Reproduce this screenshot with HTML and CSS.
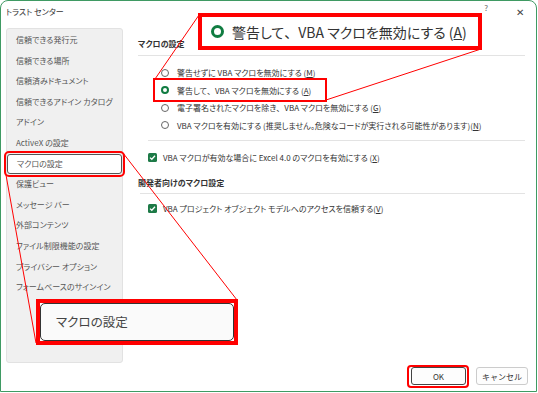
FILE: index.html
```html
<!DOCTYPE html>
<html lang="ja">
<head>
<meta charset="utf-8">
<link rel="stylesheet" href="styles.css">
</head>
<body>
<div class="stage">
  <div class="window">
    <div class="titlebar">
      <span class="title">トラスト センター</span>
      <span class="help">?</span>
      <span class="close">✕</span>
    </div>
    <div class="content">
      <nav class="sidebar">
        <div class="nav-item">信頼できる発行元</div>
        <div class="nav-item">信頼できる場所</div>
        <div class="nav-item">信頼済みドキュメント</div>
        <div class="nav-item">信頼できるアドイン カタログ</div>
        <div class="nav-item">アドイン</div>
        <div class="nav-item">ActiveX の設定</div>
        <div class="nav-item selected">マクロの設定</div>
        <div class="nav-item">保護ビュー</div>
        <div class="nav-item">メッセージ バー</div>
        <div class="nav-item">外部コンテンツ</div>
        <div class="nav-item">ファイル制限機能の設定</div>
        <div class="nav-item">プライバシー オプション</div>
        <div class="nav-item">フォームベースのサインイン</div>
      </nav>
      <main class="main">
        <div class="section-title">マクロの設定</div>
        <div class="sep"></div>
        <div class="radios">
          <div class="row"><span class="radio"></span><span>警告せずに VBA マクロを無効にする (<u>M</u>)</span></div>
          <div class="row"><span class="radio on"></span><span>警告して<span class="wide">、</span>VBA マクロを無効にする (<u>A</u>)</span></div>
          <div class="row"><span class="radio"></span><span>電子署名されたマクロを除き<span class="wide">、</span>VBA マクロを無効にする (<u>G</u>)</span></div>
          <div class="row"><span class="radio"></span><span>VBA マクロを有効にする (推奨しません。危険なコードが実行される可能性があります)(<u>N</u>)</span></div>
        </div>
        <div class="sep sep-indent"></div>
        <div class="row check-row first-check"><span class="check"><svg viewBox="0 0 9 9" width="9" height="9"><path d="M2 4.6 L3.8 6.3 L7 2.8" fill="none" stroke="#fff" stroke-width="1.3"/></svg></span><span>VBA マクロが有効な場合に Excel 4.0 のマクロを有効にする (<u>X</u>)</span></div>
        <div class="section-title second">開発者向けのマクロ設定</div>
        <div class="sep sep-small"></div>
        <div class="row check-row second-check"><span class="check"><svg viewBox="0 0 9 9" width="9" height="9"><path d="M2 4.6 L3.8 6.3 L7 2.8" fill="none" stroke="#fff" stroke-width="1.3"/></svg></span><span>VBA プロジェクト オブジェクト モデルへのアクセスを信頼する(<u>V</u>)</span></div>
      </main>
    </div>
    <div class="footer">
      <button class="btn default">OK</button>
      <button class="btn">キャンセル</button>
    </div>
  </div>

  <svg class="lines" width="538" height="393" viewBox="0 0 538 393">
    <line x1="155" y1="79" x2="199" y2="15" stroke="#f00" stroke-width="1"/>
    <line x1="326" y1="100" x2="481" y2="49" stroke="#f00" stroke-width="1"/>
    <line x1="123" y1="153" x2="237" y2="300" stroke="#f00" stroke-width="1"/>
    <line x1="6" y1="175" x2="36" y2="343" stroke="#f00" stroke-width="1"/>
  </svg>

  <div class="hl hl-radio"></div>
  <div class="hl hl-nav"></div>
  <div class="hl hl-ok"></div>

  <div class="callout callout-top">
    <span class="big-radio"></span>
    <span class="callout-text">警告して<span class="wide">、</span>VBA マクロを無効にする (<u>A</u>)</span>
  </div>

  <div class="callout callout-nav">
    <div class="callout-inner">マクロの設定</div>
  </div>
</div>
</body>
</html>
```

FILE: styles.css
```css
* { box-sizing: border-box; }
html, body { margin: 0; padding: 0; background: #fff; }
body {
  font-family: "Noto Sans CJK JP", "Noto Sans", sans-serif;
  font-feature-settings: "palt";
  color: #333;
}
.wide { font-feature-settings: normal; }
.stage {
  position: relative;
  width: 538px;
  height: 393px;
  overflow: hidden;
}
.window {
  width: 537px;
  height: 392px;
  border: 1px solid #3f9a63;
  border-radius: 8px 8px 0 0;
  background: #fff;
  display: flex;
  flex-direction: column;
}
.titlebar {
  height: 27px;
  display: flex;
  align-items: flex-start;
  padding-left: 5px;
  flex: none;
}
.title {
  font-size: 8px;
  line-height: 10px;
  margin-top: 6px;
  color: #333;
}
.help {
  margin-left: auto;
  font-size: 8px;
  line-height: 10px;
  margin-top: 2px;
  color: #666;
}
.close {
  font-size: 10px;
  line-height: 12px;
  margin-top: 5px;
  margin-left: 28px;
  margin-right: 12px;
  color: #444;
}
.content {
  height: 335px;
  display: flex;
  flex: none;
}
.sidebar {
  width: 117px;
  margin-left: 5px;
  background: #f0f0f0;
  border: 1px solid #e2e2e2;
  border-radius: 3px;
  padding-top: 1px;
}
.nav-item {
  height: 20.6px;
  line-height: 20.6px;
  font-size: 8px;
  color: #555;
  padding-left: 9px;
  white-space: nowrap;
}
.nav-item.selected {
  background: #fff;
  border: 1px solid #555;
  border-radius: 3px;
  line-height: 18.6px;
  padding-left: 9px;
}
.main {
  flex: 1;
  margin-left: 15px;
  margin-right: 11px;
  padding-top: 8px;
  font-size: 8px;
}
.section-title {
  font-weight: bold;
  line-height: 16px;
  font-size: 8px;
  color: #333;
}
.sep {
  height: 1px;
  background: #e3e3e3;
  margin-top: 3px;
}
.sep-indent { margin-left: 10px; margin-top: 6px; }
.sep-small { margin-top: 2px; margin-left: 2px; }
.radios {
  padding-top: 8px;
  padding-left: 23px;
}
.row {
  height: 17.5px;
  display: flex;
  align-items: center;
  white-space: nowrap;
  color: #333;
}
.radio {
  width: 8px;
  height: 8px;
  border: 1px solid #666;
  border-radius: 50%;
  background: #fff;
  margin-right: 8px;
  flex: none;
}
.radio.on {
  border: 2.3px solid #107c41;
}
.check-row { padding-left: 10px; height: 17px; }
.first-check { margin-top: 7.5px; }
.second-check { margin-top: 5.5px; }
.check {
  width: 9px;
  height: 9px;
  background: #1d7a47;
  border-radius: 1.5px;
  margin-right: 6px;
  flex: none;
  display: flex;
}
.section-title.second { margin-top: 9.5px; }
u { text-underline-offset: 1px; }
.footer {
  flex: 1;
  display: flex;
  justify-content: flex-end;
  align-items: flex-start;
  padding-top: 4px;
  padding-right: 8px;
  gap: 10px;
}
.btn {
  font-family: inherit;
  font-size: 8px;
  height: 18px;
  padding: 0;
  background: #fdfdfd;
  border: 1px solid #ccc;
  border-radius: 3px;
  color: #333;
  width: 52px;
}
.btn.default {
  width: 55px;
  border: 1.5px solid #444;
}
.lines {
  position: absolute;
  left: 0;
  top: 0;
  pointer-events: none;
}
.hl {
  position: absolute;
  border: 2px solid #f00;
}
.hl-radio { left: 153px; top: 78px; width: 174px; height: 24px; }
.hl-nav { left: 4px; top: 151px; width: 121px; height: 26px; border-radius: 5px; }
.hl-ok { left: 407px; top: 365px; width: 62px; height: 23px; border-radius: 4px; }
.callout {
  position: absolute;
  border: 4px solid #f00;
  background: #fff;
}
.callout-top {
  left: 198px;
  top: 13px;
  width: 284px;
  height: 37px;
  display: flex;
  align-items: center;
  padding-left: 9px;
}
.big-radio {
  width: 13px;
  height: 13px;
  border: 3.5px solid #107c41;
  border-radius: 50%;
  margin-right: 8px;
  flex: none;
}
.callout-text {
  font-size: 14px;
  color: #333;
  white-space: nowrap;
}
.callout-nav {
  left: 36px;
  top: 299px;
  width: 202px;
  height: 46px;
  padding: 0;
}
.callout-inner {
  height: 100%;
  border: 1.5px solid #333;
  border-radius: 5px;
  background: #fafafa;
  font-size: 12.5px;
  line-height: 35px;
  padding-left: 15px;
  color: #444;
}
```
